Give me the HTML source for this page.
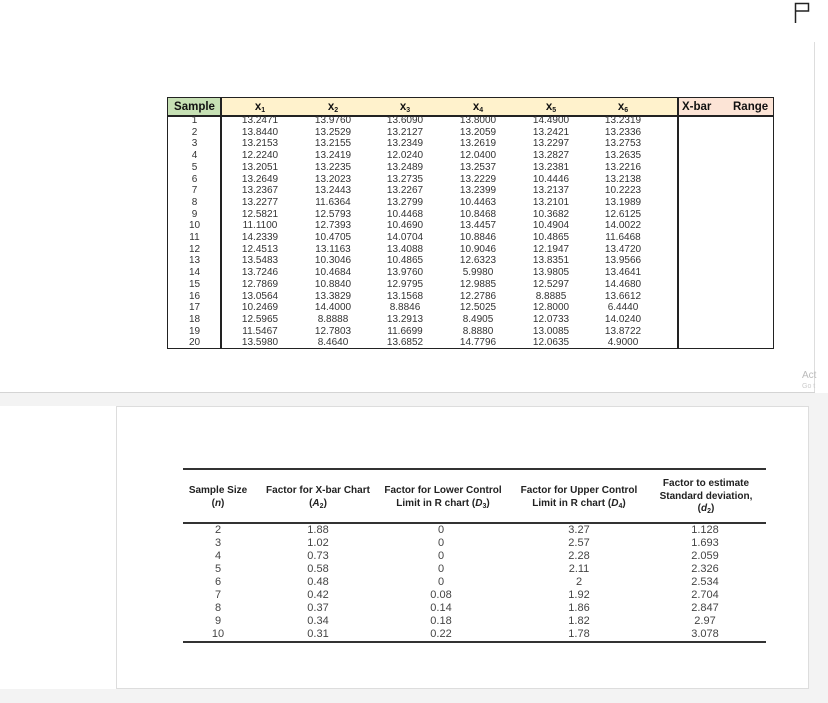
<!DOCTYPE html>
<html><head><meta charset="utf-8"><style>
body{margin:0;width:828px;height:703px;background:#fff;position:relative;overflow:hidden;font-family:"Liberation Sans",Arial,sans-serif;}
.a{position:absolute}
sub{font-size:7px;line-height:0;vertical-align:-2px}
.t{position:absolute;text-align:center;font-size:10px;color:#333;line-height:11.7px}
.h{position:absolute;text-align:center;font-weight:bold;font-size:11.5px;color:#111;line-height:14px}
.b{position:absolute;text-align:center;font-size:11px;color:#444;line-height:13px}
.bh{position:absolute;text-align:center;font-weight:bold;font-size:10px;color:#222;line-height:12.5px}
</style></head><body>
<svg class="a" style="left:790px;top:0" width="24" height="26"><path d="M5.5 23V3.5H18.5V11H5.5" fill="none" stroke="#222" stroke-width="1.5"/></svg>
<div class="a" style="left:814px;top:42px;width:1px;height:351px;background:#ddd"></div>
<div class="a" style="left:0;top:392px;width:815px;height:1px;background:#d4d4d4"></div>
<div class="a" style="left:0;top:393px;width:828px;height:13px;background:#f3f3f3"></div>
<div class="a" style="left:809px;top:393px;width:19px;height:310px;background:#f3f3f3"></div>
<div class="a" style="left:0;top:689px;width:828px;height:14px;background:#f3f3f3"></div>
<div class="a" style="left:116px;top:406px;width:693px;height:283px;background:#fff;border:1px solid #ddd;box-sizing:border-box"></div>
<div class="a" style="left:802px;top:370px;font-size:10px;color:#bbb">Act</div>
<div class="a" style="left:802px;top:383px;font-size:7px;color:#ccc">Go t</div>

<div class="a" style="left:167px;top:97px;width:607px;height:252px;border:1.5px solid #222;box-sizing:border-box"></div>
<div class="a" style="left:168px;top:98px;width:53px;height:17px;background:#c6e0b4"></div>
<div class="a" style="left:221px;top:98px;width:457px;height:17px;background:#fff2cc"></div>
<div class="a" style="left:678px;top:98px;width:95px;height:17px;background:#fce4d6"></div>
<div class="a" style="left:167px;top:115px;width:607px;height:1.5px;background:#222"></div>
<div class="a" style="left:220px;top:97px;width:1.5px;height:252px;background:#222"></div>
<div class="a" style="left:677px;top:97px;width:1.5px;height:252px;background:#222"></div>
<div class="h" style="left:168px;top:100px;width:53px">Sample</div>
<div class="h" style="left:224px;top:100px;width:72px">x<sub>1</sub></div>
<div class="h" style="left:297px;top:100px;width:72px">x<sub>2</sub></div>
<div class="h" style="left:369px;top:100px;width:72px">x<sub>3</sub></div>
<div class="h" style="left:442px;top:100px;width:72px">x<sub>4</sub></div>
<div class="h" style="left:515px;top:100px;width:72px">x<sub>5</sub></div>
<div class="h" style="left:587px;top:100px;width:72px">x<sub>6</sub></div>
<div class="h" style="left:682px;top:100px">X-bar</div>
<div class="h" style="left:733px;top:100px">Range</div>
<div class="t" style="left:168px;top:115px;width:53px">1<br>2<br>3<br>4<br>5<br>6<br>7<br>8<br>9<br>10<br>11<br>12<br>13<br>14<br>15<br>16<br>17<br>18<br>19<br>20</div>
<div class="t" style="left:224px;top:115px;width:72px">13.2471<br>13.8440<br>13.2153<br>12.2240<br>13.2051<br>13.2649<br>13.2367<br>13.2277<br>12.5821<br>11.1100<br>14.2339<br>12.4513<br>13.5483<br>13.7246<br>12.7869<br>13.0564<br>10.2469<br>12.5965<br>11.5467<br>13.5980</div>
<div class="t" style="left:297px;top:115px;width:72px">13.9760<br>13.2529<br>13.2155<br>13.2419<br>13.2235<br>13.2023<br>13.2443<br>11.6364<br>12.5793<br>12.7393<br>10.4705<br>13.1163<br>10.3046<br>10.4684<br>10.8840<br>13.3829<br>14.4000<br>8.8888<br>12.7803<br>8.4640</div>
<div class="t" style="left:369px;top:115px;width:72px">13.6090<br>13.2127<br>13.2349<br>12.0240<br>13.2489<br>13.2735<br>13.2267<br>13.2799<br>10.4468<br>10.4690<br>14.0704<br>13.4088<br>10.4865<br>13.9760<br>12.9795<br>13.1568<br>8.8846<br>13.2913<br>11.6699<br>13.6852</div>
<div class="t" style="left:442px;top:115px;width:72px">13.8000<br>13.2059<br>13.2619<br>12.0400<br>13.2537<br>13.2229<br>13.2399<br>10.4463<br>10.8468<br>13.4457<br>10.8846<br>10.9046<br>12.6323<br>5.9980<br>12.9885<br>12.2786<br>12.5025<br>8.4905<br>8.8880<br>14.7796</div>
<div class="t" style="left:515px;top:115px;width:72px">14.4900<br>13.2421<br>13.2297<br>13.2827<br>13.2381<br>10.4446<br>13.2137<br>13.2101<br>10.3682<br>10.4904<br>10.4865<br>12.1947<br>13.8351<br>13.9805<br>12.5297<br>8.8885<br>12.8000<br>12.0733<br>13.0085<br>12.0635</div>
<div class="t" style="left:587px;top:115px;width:72px">13.2319<br>13.2336<br>13.2753<br>13.2635<br>13.2216<br>13.2138<br>10.2223<br>13.1989<br>12.6125<br>14.0022<br>11.6468<br>13.4720<br>13.9566<br>13.4641<br>14.4680<br>13.6612<br>6.4440<br>14.0240<br>13.8722<br>4.9000</div>

<div class="a" style="left:183px;top:468px;width:583px;height:2px;background:#333"></div>
<div class="a" style="left:183px;top:522px;width:583px;height:2px;background:#333"></div>
<div class="a" style="left:183px;top:641px;width:583px;height:2px;background:#333"></div>
<div class="bh" style="left:180px;top:485px;width:76px">Sample Size<br>(<i>n</i>)</div>
<div class="bh" style="left:256px;top:485px;width:124px">Factor for X-bar Chart<br>(<i>A</i><sub>2</sub>)</div>
<div class="bh" style="left:376px;top:485px;width:134px">Factor for Lower Control<br>Limit in R chart (<i>D</i><sub>3</sub>)</div>
<div class="bh" style="left:510px;top:485px;width:138px">Factor for Upper Control<br>Limit in R chart (<i>D</i><sub>4</sub>)</div>
<div class="bh" style="left:648px;top:478px;width:116px">Factor to estimate<br>Standard deviation,<br>(<i>d</i><sub>2</sub>)</div>
<div class="b" style="left:183px;top:524px;width:70px">2<br>3<br>4<br>5<br>6<br>7<br>8<br>9<br>10</div>
<div class="b" style="left:278px;top:524px;width:80px">1.88<br>1.02<br>0.73<br>0.58<br>0.48<br>0.42<br>0.37<br>0.34<br>0.31</div>
<div class="b" style="left:401px;top:524px;width:80px">0<br>0<br>0<br>0<br>0<br>0.08<br>0.14<br>0.18<br>0.22</div>
<div class="b" style="left:539px;top:524px;width:80px">3.27<br>2.57<br>2.28<br>2.11<br>2<br>1.92<br>1.86<br>1.82<br>1.78</div>
<div class="b" style="left:665px;top:524px;width:80px">1.128<br>1.693<br>2.059<br>2.326<br>2.534<br>2.704<br>2.847<br>2.97<br>3.078</div>
</body></html>
